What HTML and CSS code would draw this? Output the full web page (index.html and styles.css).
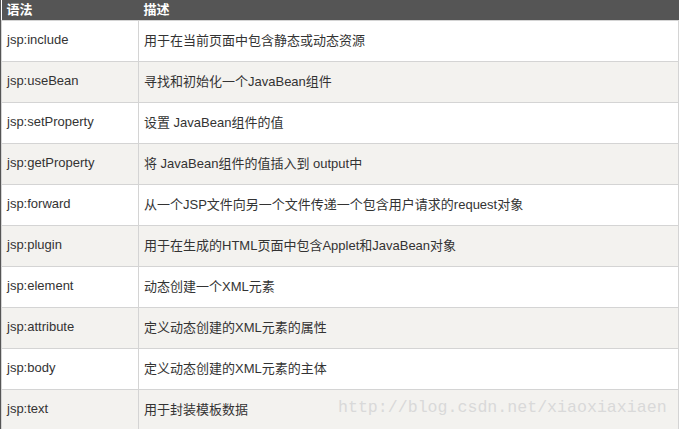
FILE: index.html
```html
<!DOCTYPE html>
<html lang="zh-CN">
<head>
    <meta charset="UTF-8">
    <title>JSP 动作元素</title>
    <link rel="stylesheet" href="styles.css">
</head>
<body>
    <div class="wrap">
        <table class="syntax-table">
            <thead>
                <tr>
                    <th class="col-name">语法</th>
                    <th>描述</th>
                </tr>
            </thead>
            <tbody>
                <tr><td>jsp:include</td><td>用于在当前页面中包含静态或动态资源</td></tr>
                <tr><td>jsp:useBean</td><td>寻找和初始化一个JavaBean组件</td></tr>
                <tr><td>jsp:setProperty</td><td>设置 JavaBean组件的值</td></tr>
                <tr><td>jsp:getProperty</td><td>将 JavaBean组件的值插入到 output中</td></tr>
                <tr><td>jsp:forward</td><td>从一个JSP文件向另一个文件传递一个包含用户请求的request对象</td></tr>
                <tr><td>jsp:plugin</td><td>用于在生成的HTML页面中包含Applet和JavaBean对象</td></tr>
                <tr><td>jsp:element</td><td>动态创建一个XML元素</td></tr>
                <tr><td>jsp:attribute</td><td>定义动态创建的XML元素的属性</td></tr>
                <tr><td>jsp:body</td><td>定义动态创建的XML元素的主体</td></tr>
                <tr><td>jsp:text</td><td>用于封装模板数据</td></tr>
            </tbody>
        </table>
        <!-- blog watermark over the last row -->
        <span class="watermark">http://blog.csdn.net/xiaoxiaxiaen</span>
    </div>
</body>
</html>
```

FILE: styles.css
```css
* {
    margin: 0;
    padding: 0;
    box-sizing: border-box;
}

body {
    background-color: #ffffff;
    color: #333333;
    font-family: 'Liberation Sans', Arial, 'Noto Sans CJK SC', sans-serif;
    font-size: 13px;
    overflow: hidden;
}

.wrap {
    position: relative;
    width: 679px;
    height: 429px;
    background-color: #555555;
}

.syntax-table {
    width: 678px;
    margin-left: 1px;
    border-collapse: collapse;
    background-color: #ffffff;
}

.syntax-table thead tr {
    background-color: #555555;
}

.syntax-table th {
    height: 20px;
    padding: 0 5px 1px;
    color: #ffffff;
    font-weight: bold;
    font-size: 13px;
    text-align: left;
    vertical-align: middle;
    line-height: 19px;
}

.syntax-table .col-name {
    width: 137px;
}

.syntax-table td {
    height: 41px;
    padding: 0 5px 3px;
    border: 1px solid #d4d4d4;
    vertical-align: middle;
    white-space: nowrap;
}

.syntax-table tbody tr:nth-child(even) {
    background-color: #f3f2ef;
}

.watermark {
    position: absolute;
    left: 338px;
    top: 398px;
    font-family: 'Liberation Mono', 'Courier New', monospace;
    font-size: 16.6px;
    color: #d9d9d9;
    white-space: nowrap;
}
```
